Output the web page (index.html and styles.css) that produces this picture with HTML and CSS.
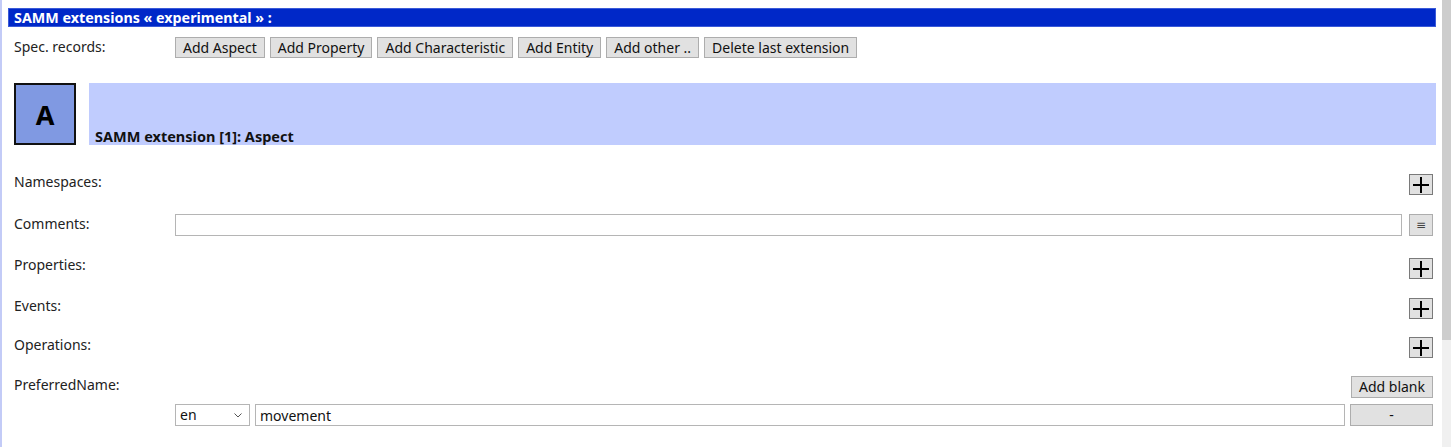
FILE: index.html
```html
<!DOCTYPE html>
<html lang="en">
<head>
<meta charset="utf-8">
<title>SAMM extensions</title>
<link rel="stylesheet" href="styles.css">
</head>
<body>
<div class="page">
  <main class="content">
    <div class="section-title">SAMM extensions « experimental » :</div>

    <div class="row row-spec">
      <div class="label">Spec. records:</div>
      <div class="btn-group">
        <button class="btn">Add Aspect</button>
        <button class="btn">Add Property</button>
        <button class="btn">Add Characteristic</button>
        <button class="btn">Add Entity</button>
        <button class="btn">Add other ..</button>
        <button class="btn">Delete last extension</button>
      </div>
    </div>

    <div class="ext-header">
      <div class="ext-icon">A</div>
      <div class="ext-bar">SAMM extension [1]: Aspect</div>
    </div>

    <div class="row row-ns">
      <div class="label">Namespaces:</div>
      <div class="fill"></div>
      <button class="btn-plus" aria-label="add"><svg width="16" height="16" viewBox="0 0 16 16"><path d="M8 0v16M0 8h16" stroke="#000" stroke-width="2"/></svg></button>
    </div>

    <div class="row row-comments">
      <div class="label">Comments:</div>
      <input class="text-input fill" type="text" value="">
      <button class="btn-menu" aria-label="menu">≡</button>
    </div>

    <div class="row row-props">
      <div class="label">Properties:</div>
      <div class="fill"></div>
      <button class="btn-plus" aria-label="add"><svg width="16" height="16" viewBox="0 0 16 16"><path d="M8 0v16M0 8h16" stroke="#000" stroke-width="2"/></svg></button>
    </div>

    <div class="row row-events">
      <div class="label">Events:</div>
      <div class="fill"></div>
      <button class="btn-plus" aria-label="add"><svg width="16" height="16" viewBox="0 0 16 16"><path d="M8 0v16M0 8h16" stroke="#000" stroke-width="2"/></svg></button>
    </div>

    <div class="row row-ops">
      <div class="label">Operations:</div>
      <div class="fill"></div>
      <button class="btn-plus" aria-label="add"><svg width="16" height="16" viewBox="0 0 16 16"><path d="M8 0v16M0 8h16" stroke="#000" stroke-width="2"/></svg></button>
    </div>

    <div class="row row-pref">
      <div class="label">PreferredName:</div>
      <div class="fill"></div>
      <button class="btn btn-blank">Add blank</button>
    </div>

    <div class="row row-lang">
      <div class="label"></div>
      <div class="select">
        <span>en</span>
        <svg class="chev" width="8" height="5" viewBox="0 0 8 5"><path d="M0.5 0.5L4 4L7.5 0.5" fill="none" stroke="#555" stroke-width="1"/></svg>
      </div>
      <input class="text-input fill" type="text" value="movement">
      <button class="btn btn-minus">-</button>
    </div>
  </main>
  <div class="scrollbar">
    <div class="thumb"></div>
  </div>
</div>
</body>
</html>
```

FILE: styles.css
```css
* { box-sizing: border-box; }

html, body {
  margin: 0;
  padding: 0;
  background: #fff;
}

body {
  font-family: "Noto Sans", "Open Sans", sans-serif;
  font-size: 14px;
  color: #222;
}

.page {
  display: flex;
  height: 447px;
  border-left: 2px solid #c3cbf7;
  overflow: hidden;
}

.content {
  flex: 1;
  padding: 8px 3px 0 6px;
  min-width: 0;
}

.section-title {
  background: #0028c8;
  border: 1px solid #3a5ad8;
  color: #fff;
  font-weight: 700;
  font-size: 14.3px;
  height: 19px;
  line-height: 17px;
  padding-left: 5px;
  margin-right: -3px;
}

.row {
  display: flex;
  align-items: flex-start;
  padding-left: 6px;
}

.label {
  width: 161px;
  flex: none;
  line-height: 20px;
  color: #222;
}

.fill { flex: 1; min-width: 0; }

.btn-group {
  display: flex;
  gap: 5px;
}

.btn {
  font-family: inherit;
  font-size: 14px;
  color: #111;
  background: #e1e1e1;
  border: 1px solid #adadad;
  height: 21px;
  line-height: 18px;
  padding: 0 7px;
  margin: 0;
  border-radius: 0;
}

.row-spec { margin-top: 10px; }

.ext-header {
  display: flex;
  gap: 13px;
  margin-top: 25px;
  padding-left: 6px;
  margin-right: -3px;
}

.ext-icon {
  width: 62px;
  height: 62px;
  flex: none;
  background: #8099e2;
  border: 2px solid #111;
  font-weight: 700;
  font-size: 27px;
  color: #000;
  display: flex;
  align-items: center;
  justify-content: center;
}

.ext-bar {
  flex: 1;
  height: 62px;
  background: #c0ccfe;
  font-weight: 700;
  font-size: 14.5px;
  color: #111;
  display: flex;
  align-items: flex-end;
  padding: 0 0 1px 6px;
  line-height: 16px;
}

.btn-plus {
  width: 24px;
  height: 21px;
  background: #e1e1e1;
  border: 1px solid #7a7a7a;
  padding: 0;
  margin: 2px 0 0 0;
  display: flex;
  align-items: center;
  justify-content: center;
  border-radius: 0;
}

.btn-menu {
  width: 24px;
  height: 22px;
  background: #e1e1e1;
  border: 1px solid #adadad;
  padding: 0;
  margin: 0 0 0 7px;
  font-size: 12px;
  color: #444;
  line-height: 18px;
  border-radius: 0;
  font-family: "DejaVu Sans", sans-serif;
}

.text-input {
  height: 22px;
  border: 1px solid #b5b5b5;
  padding: 0 4px;
  font-family: inherit;
  font-size: 14px;
  color: #111;
  background: #fff;
  outline: none;
  border-radius: 0;
}

.row-ns { margin-top: 27px; }
.row-comments { margin-top: 19px; }
.row-props { margin-top: 19px; }
.row-props .btn-plus { margin-top: 3px; }
.row-events { margin-top: 17px; }
.row-ops { margin-top: 16px; }
.row-pref { margin-top: 17px; }
.row-pref .btn-blank { margin-top: 1px; height: 22px; }
.row-lang { margin-top: 6px; align-items: stretch; height: 22px; }

.select {
  position: relative;
  width: 75px;
  height: 22px;
  flex: none;
  border: 1px solid #b5b5b5;
  background: #fff;
  padding: 0 4px;
  line-height: 19px;
  color: #111;
  margin-right: 5px;
}

.chev {
  position: absolute;
  right: 7px;
  top: 8px;
}

.btn-minus {
  width: 83px;
  height: 22px;
  margin-left: 5px;
  padding: 0;
}

.scrollbar {
  width: 9px;
  flex: none;
  margin-left: 6px;
  background: #f0f0f0;
}

.thumb {
  height: 340px;
  background: #cdcdcd;
}
```
